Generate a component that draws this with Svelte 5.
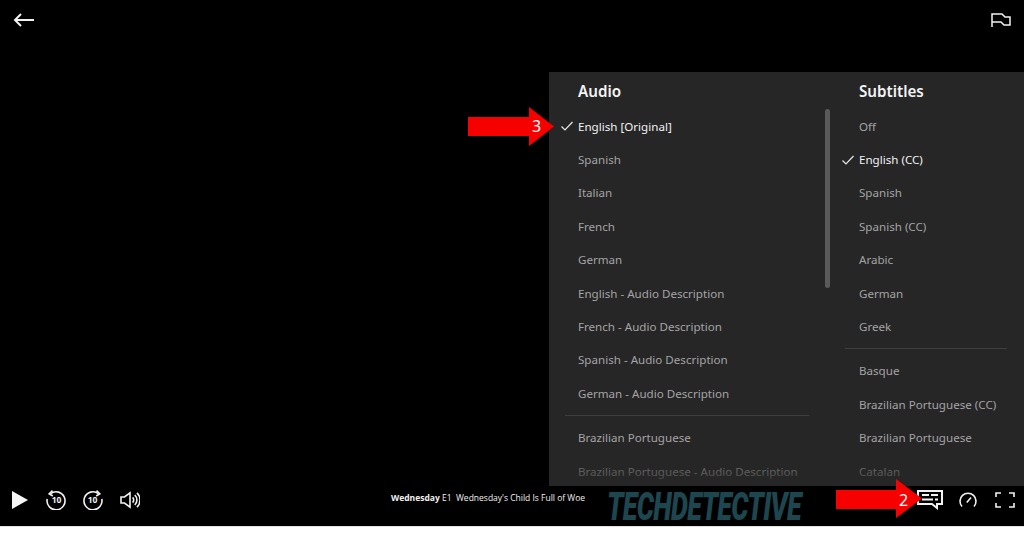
<script>
  const audio = [
    { label: 'English [Original]', selected: true },
    { label: 'Spanish' },
    { label: 'Italian' },
    { label: 'French' },
    { label: 'German' },
    { label: 'English - Audio Description' },
    { label: 'French - Audio Description' },
    { label: 'Spanish - Audio Description' },
    { label: 'German - Audio Description' },
    { divider: true },
    { label: 'Brazilian Portuguese' },
    { label: 'Brazilian Portuguese - Audio Description' }
  ];
  const subtitles = [
    { label: 'Off' },
    { label: 'English (CC)', selected: true },
    { label: 'Spanish' },
    { label: 'Spanish (CC)' },
    { label: 'Arabic' },
    { label: 'German' },
    { label: 'Greek' },
    { divider: true },
    { label: 'Basque' },
    { label: 'Brazilian Portuguese (CC)' },
    { label: 'Brazilian Portuguese' },
    { label: 'Catalan' }
  ];
  const columns = [
    { title: 'Audio', items: audio, cls: 'audio' },
    { title: 'Subtitles', items: subtitles, cls: 'subs' }
  ];
</script>

<div class="player">
  <header class="top">
    <svg class="back" viewBox="0 0 22 14" width="22" height="14"><path d="M21 7H2M8 1 2 7l6 6" /></svg>
    <svg class="flag" viewBox="0 0 22 14" width="22" height="14"><path d="M3 14V1h10l3 3h5v8h-6l-3-3H3" /></svg>
  </header>

  <div class="spacer"></div>

  <footer class="controls">
    <div class="group left">
      <svg class="play" viewBox="0 0 16 18" width="16" height="18"><path d="M0 0 16 9 0 18z" /></svg>
      <svg class="ic" viewBox="0 0 20 20" width="20" height="20">
        <path d="M4.6 3.6A9 9 0 1 1 1.2 9" /><path d="M6.5 0.6 3.2 3.8 6.8 6" />
        <text x="10.5" y="13.4" text-anchor="middle">10</text>
      </svg>
      <svg class="ic" viewBox="0 0 20 20" width="20" height="20">
        <path d="M15.4 3.6A9 9 0 1 0 18.8 9" /><path d="M13.5 0.6 16.8 3.8 13.2 6" />
        <text x="9.5" y="13.4" text-anchor="middle">10</text>
      </svg>
      <svg class="ic" viewBox="0 0 20 20" width="20" height="20">
        <path d="M1 7h3.5L10 2.8v14.4L4.5 13H1z" /><path d="M12.6 7.4a3.6 3.6 0 0 1 0 5.2M14.8 5a7 7 0 0 1 0 10M17 2.8a10 10 0 0 1 0 14.4" />
      </svg>
    </div>
    <p class="title"><b>Wednesday</b> E1&nbsp; Wednesday's Child Is Full of Woe</p>
    <div class="group right">
      <svg class="ic cc" viewBox="0 0 26 20" width="26" height="20">
        <path d="M1 1h24v13h-5v4l-5-4H1z" /><path d="M5 5h7M14 5h7M5 9.500h11M18 9.500h3" />
      </svg>
      <svg class="ic speed" viewBox="0 0 18 16" width="18" height="16">
        <path d="M3 14.500A8 8 0 1 1 15 14.500" /><path d="M7.800 10.500 12 5.500" />
      </svg>
      <svg class="ic full" viewBox="0 0 20 16" width="20" height="16">
        <path d="M1 5V1h5M14 1h5v4M19 11v4h-5M6 15H1v-4" />
      </svg>
    </div>
  </footer>

  <section class="panel">
    {#each columns as col}
      <div class="col {col.cls}">
        <h2>{col.title}</h2>
        {#each col.items as item}
          {#if item.divider}
            <hr />
          {:else}
            <div class="row" class:selected={item.selected}>
              <span class="slot">
                {#if item.selected}
                  <svg viewBox="0 0 12 10" width="12" height="10"><path d="M0.500 5.500 4 9 11.500 1" /></svg>
                {/if}
              </span>
              <span>{item.label}</span>
            </div>
          {/if}
        {/each}
      </div>
    {/each}
    <div class="scroll"></div>
    <div class="fade"></div>
  </section>

  <svg class="arrow a3" viewBox="0 0 86 39" width="86" height="39"><path d="M0 10H61V0L86 19.500 61 39V29H0z" /></svg>
  <span class="num n3">3</span>
  <svg class="arrow a2" viewBox="0 0 86 39" width="86" height="39"><path d="M0 11H60V0L86 19.500 60 39V30H0z" /></svg>
  <span class="num n2">2</span>

  <div class="mark">TECHDETECTIVE</div>
</div>

<style>
  :global(body) {
    margin: 0;
    background: #fff;
  }
  .player {
    position: relative;
    display: flex;
    flex-direction: column;
    height: 526px;
    background: #000;
    border-bottom: 1px solid #e2e2e2;
    overflow: hidden;
    font-family: "Noto Sans", "Open Sans", sans-serif;
  }
  svg path {
    fill: none;
    stroke: #f2f2f2;
    stroke-width: 1.6;
  }
  .top {
    display: flex;
    justify-content: space-between;
    padding: 13px 13px 0 13px;
  }
  .top .back path { stroke-width: 2; }
  .top .flag path { stroke-width: 1.5; }
  .spacer { flex: 1; }
  .controls {
    display: flex;
    align-items: center;
    height: 40px;
    box-sizing: border-box;
    padding: 0 9px 12px 12px;
  }
  .group {
    display: flex;
    align-items: center;
  }
  .left { gap: 17px; width: 379px; flex: none; }
  .left .play { margin-right: 1px; }
  .left .play path { fill: #f5f5f5; stroke: none; }
  .ic text {
    font-size: 8.5px;
    font-weight: 700;
    fill: #f2f2f2;
    font-family: "Open Sans", sans-serif;
  }
  .title {
    margin: -4px 0 0;
    font-size: 8.5px;
    line-height: 12px;
    color: #f0f0f0;
    white-space: nowrap;
    font-family: "Open Sans", sans-serif;
  }
  .title b { font-weight: 700; }
  .right { gap: 16px; margin-left: auto; }
  .right .full { margin-left: 2px; }
  .cc path { stroke-width: 2; }
  .panel {
    position: absolute;
    left: 549px;
    top: 72px;
    width: 475px;
    height: 414px;
    display: flex;
    background: #262626;
    overflow: hidden;
  }
  .col { flex: none; }
  .audio { width: 281px; }
  .subs { width: 194px; }
  h2 {
    margin: 0 0 0 29px;
    height: 37.5px;
    padding-top: 8px;
    box-sizing: border-box;
    font-size: 15.2px;
    line-height: 22px;
    font-weight: 600;
    color: #f4f4f4;
  }
  .row {
    display: flex;
    align-items: center;
    height: 33.4px;
    font-size: 11.6px;
    color: #a4a4a4;
    white-space: nowrap;
  }
  .row.selected { color: #f2f2f2; }
  .slot {
    flex: none;
    width: 29px;
    display: flex;
    justify-content: flex-end;
    padding-right: 5px;
    box-sizing: border-box;
  }
  .slot path { stroke: #e8e8e8; stroke-width: 1.2; }
  hr {
    height: 1px;
    border: 0;
    background: #3f3f3f;
    margin: 4.500px 21px 5.500px 16px;
  }
  .subs hr { margin: 4.500px 17px 5.500px 15px; }
  .scroll {
    position: absolute;
    left: 276px;
    top: 37px;
    width: 5px;
    height: 179px;
    border-radius: 3px;
    background: #5a5a5a;
  }
  .fade {
    position: absolute;
    left: 0;
    right: 0;
    bottom: 0;
    height: 34px;
    background: linear-gradient(rgba(38, 38, 38, 0.1), rgba(38, 38, 38, 0.9));
  }
  .arrow { position: absolute; }
  .arrow path { fill: #f60000; stroke: none; }
  .a3 { left: 468px; top: 107px; }
  .a2 { left: 836px; top: 479px; }
  .num {
    position: absolute;
    font-size: 16px;
    line-height: 20px;
    color: #fff;
  }
  .n3 { left: 532px; top: 116px; }
  .n2 { left: 899px; top: 490px; }
  .mark {
    position: absolute;
    left: 607px;
    top: 495px;
    font-family: "Roboto", sans-serif;
    font-style: italic;
    font-weight: 900;
    font-size: 27px;
    line-height: 24px;
    letter-spacing: -0.7px;
    color: #1e464e;
    white-space: nowrap;
    transform-origin: left center;
    transform: scaleY(1.4);
  }
</style>
